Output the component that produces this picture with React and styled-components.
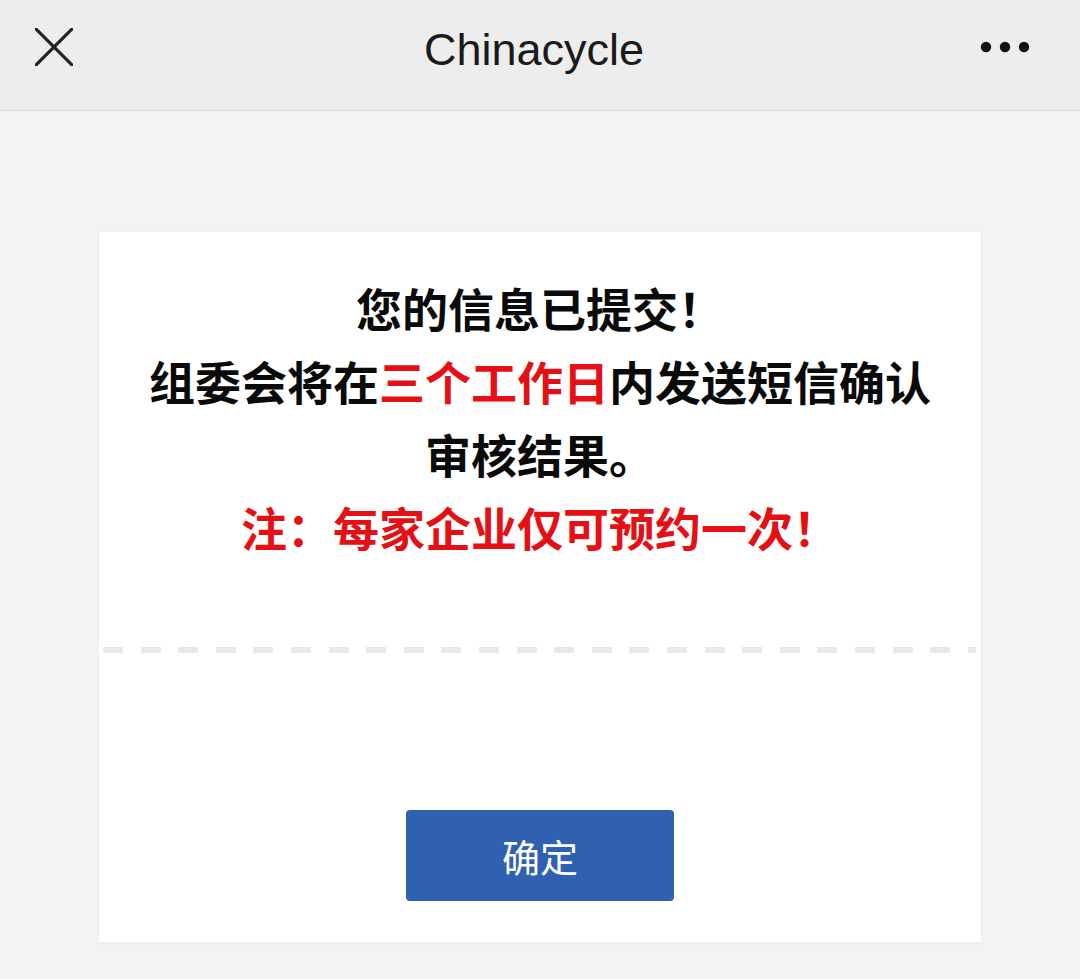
import React from 'react';
import styled, { createGlobalStyle } from 'styled-components';

const GlobalStyle = createGlobalStyle`
  html, body {
    margin: 0;
    padding: 0;
    background: #f2f3f5;
  }
  body {
    font-family: "Noto Sans CJK SC", "Liberation Sans", sans-serif;
  }
`;

const Page = styled.div`
  min-height: 979px;
  background: #f2f3f5;
`;

const NavBar = styled.header`
  height: 111px;
  background: #ededed;
  border-bottom: 1px solid #dcdcdc;
  display: grid;
  grid-template-columns: 110px 1fr 110px;
  align-items: center;
  box-sizing: border-box;
`;

const NavTitle = styled.h1`
  margin: 0;
  padding: 0 12px 10px 0;
  text-align: center;
  font-family: "Liberation Sans", Arial, sans-serif;
  font-weight: 400;
  font-size: 45px;
  letter-spacing: 0;
  color: #1a1a1a;
`;

const NavButton = styled.button`
  border: 0;
  background: transparent;
  padding: 0;
  height: 100%;
  display: flex;
  align-items: center;
  justify-content: ${(p) => (p.$right ? 'flex-end' : 'flex-start')};
  padding-left: ${(p) => (p.$right ? '0' : '35px')};
  padding-right: ${(p) => (p.$right ? '50px' : '0')};
  padding-bottom: 16px;
  cursor: pointer;
`;

const Card = styled.section`
  margin: 121px 99px 0;
  background: #fff;
  box-shadow: 0 1px 4px rgba(0, 0, 0, 0.04);
  padding: 39px 0 41px;
  display: flex;
  flex-direction: column;
  align-items: center;
`;

const Message = styled.div`
  padding: 0 40px;
  text-align: center;
  font-size: 46px;
  line-height: 73px;
  font-weight: 700;
  color: #0a0a0a;
`;

const Line = styled.p`
  margin: 0;
  color: ${(p) => (p.$red ? '#e60f14' : 'inherit')};
`;

const Red = styled.span`
  color: #e60f14;
`;

const Dashes = styled.div`
  align-self: stretch;
  margin: 84px 5px 0 4px;
  height: 6px;
  background: repeating-linear-gradient(
    to right,
    #e8e9ea 0 20px,
    transparent 20px 37.6px
  );
`;

const ConfirmButton = styled.button`
  margin-top: 157px;
  width: 268px;
  height: 91px;
  border: 0;
  border-radius: 4px;
  background: #3061b1;
  color: #fff;
  font-family: "Noto Sans CJK SC", sans-serif;
  font-size: 38px;
  font-weight: 400;
  cursor: pointer;
`;

function CloseIcon() {
  return (
    <svg width="38" height="38" viewBox="0 0 38 38">
      <path d="M1 1 L37 37 M37 1 L1 37" stroke="#222" strokeWidth="3.2" strokeLinecap="round" />
    </svg>
  );
}

function MoreIcon() {
  return (
    <svg width="50" height="12" viewBox="0 0 50 12">
      <circle cx="6" cy="6" r="5.2" fill="#111" />
      <circle cx="25" cy="6" r="5.2" fill="#111" />
      <circle cx="44" cy="6" r="5.2" fill="#111" />
    </svg>
  );
}

export default function App() {
  return (
    <Page>
      <GlobalStyle />
      <NavBar>
        <NavButton aria-label="关闭">
          <CloseIcon />
        </NavButton>
        <NavTitle>Chinacycle</NavTitle>
        <NavButton $right aria-label="更多">
          <MoreIcon />
        </NavButton>
      </NavBar>
      <Card>
        <Message>
          <Line>您的信息已提交！</Line>
          <Line>
            组委会将在<Red>三个工作日</Red>内发送短信确认审核结果。
          </Line>
          <Line $red>注：每家企业仅可预约一次！</Line>
        </Message>
        <Dashes />
        <ConfirmButton>确定</ConfirmButton>
      </Card>
    </Page>
  );
}
